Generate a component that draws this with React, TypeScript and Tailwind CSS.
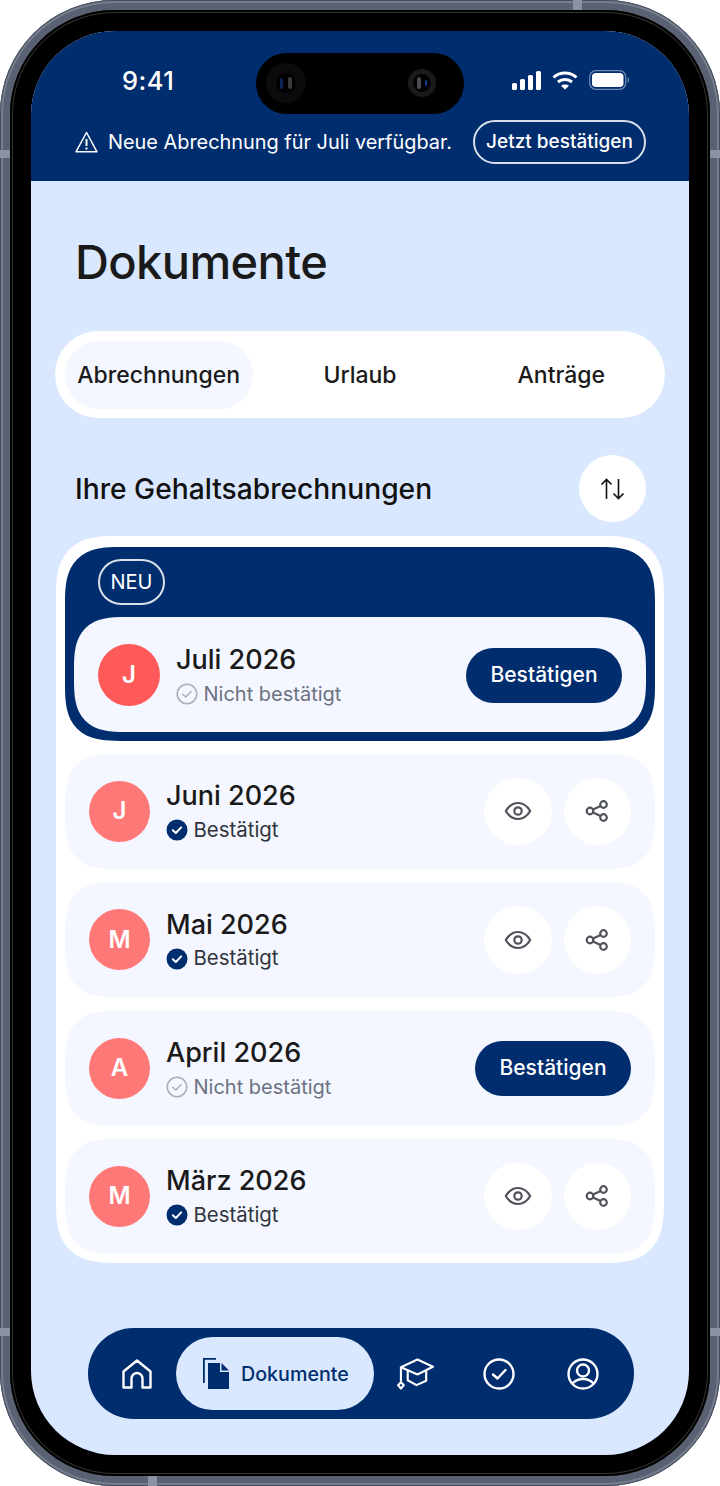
import type { ReactNode } from "react";

const font = { fontFamily: "Inter, 'Noto Sans', sans-serif" };

function CheckIcon({ done }: { done: boolean }) {
  if (done) {
    return (
      <svg width="22" height="22" viewBox="0 0 22 22" fill="none">
        <circle cx="11" cy="11" r="10.5" fill="#002d6e" />
        <path d="M6.8 11.2l3 2.8 5.4-5.6" stroke="#fff" strokeWidth="2" strokeLinecap="round" strokeLinejoin="round" />
      </svg>
    );
  }
  return (
    <svg width="22" height="22" viewBox="0 0 22 22" fill="none">
      <circle cx="11" cy="11" r="9.8" stroke="#a9afbd" strokeWidth="1.6" />
      <path d="M6.8 11.2l3 2.8 5.4-5.6" stroke="#a9afbd" strokeWidth="1.4" strokeLinecap="round" strokeLinejoin="round" />
    </svg>
  );
}

function EyeIcon() {
  return (
    <svg width="28" height="28" viewBox="0 0 28 28" fill="none" stroke="#50535c" strokeWidth="2.2">
      <path d="M1.8 14C5 8.6 9.2 6 14 6s9 2.6 12.2 8c-3.2 5.4-7.4 8-12.2 8S5 19.4 1.8 14z" strokeLinejoin="round" />
      <circle cx="14" cy="14" r="3.7" />
    </svg>
  );
}

function ShareIcon() {
  return (
    <svg width="24" height="24" viewBox="0 0 24 24" fill="none" stroke="#50535c" strokeWidth="2.2">
      <circle cx="18.5" cy="5.5" r="3.3" />
      <circle cx="5" cy="12" r="3.3" />
      <circle cx="18.5" cy="18.5" r="3.3" />
      <path d="M8 10.5l7.6-3.6M8 13.5l7.6 3.6" />
    </svg>
  );
}

function RoundButton({ children }: { children: ReactNode }) {
  return <div className="w-[67.5px] h-[67.5px] rounded-full bg-white flex items-center justify-center">{children}</div>;
}

function ConfirmButton() {
  return (
    <div className="w-[156px] h-[55px] rounded-full bg-[#002d6e] text-white text-[21px] font-medium flex items-center justify-center">
      Bestätigen
    </div>
  );
}

function RowBody({ letter, title, done, avatar }: { letter: string; title: string; done: boolean; avatar: string }) {
  return (
    <div className="flex items-center gap-4">
      <div className={`${avatar} rounded-full text-white text-[24px] font-semibold flex items-center justify-center`}>
        {letter}
      </div>
      <div className="flex flex-col pt-[2px]">
        <div className="text-[27px] leading-[36px] font-medium text-[#1a1a1a]">{title}</div>
        <div className="flex items-center gap-[5.5px] h-[32px]">
          <CheckIcon done={done} />
          <span className={done ? "text-[20.4px] text-[#30343c]" : "text-[20px] text-[#6c7282]"}>
            {done ? "Bestätigt" : "Nicht bestätigt"}
          </span>
        </div>
      </div>
    </div>
  );
}

function Row({ letter, title, done }: { letter: string; title: string; done: boolean }) {
  return (
    <div className="h-[115px] rounded-[52px] [corner-shape:superellipse(1.5)] bg-[#f4f7ff] px-6 flex items-center justify-between">
      <RowBody letter={letter} title={title} done={done} avatar="w-[61px] h-[61px] bg-[#ff7878]" />
      {done ? (
        <div className="flex items-center gap-3">
          <RoundButton>
            <EyeIcon />
          </RoundButton>
          <RoundButton>
            <ShareIcon />
          </RoundButton>
        </div>
      ) : (
        <ConfirmButton />
      )}
    </div>
  );
}

function Tab({ label, active }: { label: string; active?: boolean }) {
  return (
    <div className={`h-[68px] pt-[2px] rounded-full flex items-center justify-center text-[23px] font-medium text-[#1a1a1a] ${active ? "w-[188px] justify-self-center bg-[#f4f7ff]" : ""}`}>
      {label}
    </div>
  );
}

function Nav() {
  return (
    <div className="ml-[57px] mr-[55px] h-[91px] rounded-full bg-[#002d6e] flex items-center pl-[34px]">
      <svg className="shrink-0" width="30" height="30" viewBox="0 0 30 30" fill="none" stroke="#fff" strokeWidth="2.4" strokeLinejoin="round">
        <path d="M1.5 12.5L15 1.5l13.5 11v16h-8v-9a5.5 5.5 0 0 0-11 0v9h-8z" />
      </svg>
      <div className="ml-[24px] w-[198px] h-[73px] shrink-0 rounded-full bg-[#d9e8ff] flex items-center gap-[12px] pl-[27px]">
        <svg width="26" height="31" viewBox="0 0 26 31" fill="#002d6e">
          <path d="M0 0h13v1.8H1.8V25H0z" />
          <path d="M5 5h12v9h9v17H5z" />
          <path d="M18.5 5L26 12.5h-7.5z" />
        </svg>
        <span className="pt-[3px] text-[19.7px] font-medium text-[#002d6e]">Dokumente</span>
      </div>
      <svg className="ml-[23px] shrink-0" width="37" height="33" viewBox="0 0 38 34" fill="none" stroke="#fff" strokeWidth="2.2" strokeLinejoin="round">
        <path d="M4 10.5L21 2.5l16 7.5-16 8z" />
        <path d="M11 14v10l9 5 10-4.5V14" />
        <path d="M4 10.5V25" />
        <path d="M4 26l3 3-3 3.5L1 29z" />
      </svg>
      <svg className="ml-[49px] shrink-0" width="32" height="32" viewBox="0 0 32 32" fill="none" stroke="#fff" strokeWidth="2.4">
        <circle cx="16" cy="16" r="14.5" />
        <path d="M10 16.5l4.5 4 8-8.5" strokeLinecap="round" strokeLinejoin="round" />
      </svg>
      <svg className="ml-[52px] shrink-0" width="32" height="32" viewBox="0 0 32 32" fill="none" stroke="#fff" strokeWidth="2.4">
        <circle cx="16" cy="16" r="14.5" />
        <circle cx="16" cy="12.5" r="6" />
        <path d="M5.5 25.5c2.8-3 6.3-4.5 10.5-4.5s7.700 1.5 10.500 4.500" />
      </svg>
    </div>
  );
}

export default function App() {
  return (
    <div className="w-[720px] h-[1486px] bg-white relative overflow-hidden" style={font}>
      <div className="w-full h-full rounded-[114px] bg-[#5a6172] p-[10px] shadow-[inset_0_0_0_1px_#454c5b,inset_0_0_0_3px_#767d8c]">
        <div className="w-full h-full rounded-[104px] bg-black p-[21px] shadow-[inset_0_0_0_2px_#000,inset_0_0_0_3px_#333]">
          <div className="w-full h-full rounded-[84px] bg-[#d9e8ff] overflow-hidden flex flex-col relative">
            <div className="h-[150px] bg-[#002d6e] text-white flex flex-col shrink-0">
              <div className="h-[89px] flex items-center pt-[9px] justify-between pl-[91px] pr-[60px]">
                <span className="text-[25.5px] leading-[30px] mt-[2px] font-medium tracking-[0.5px]">9:41</span>
                <div className="flex items-center gap-[11px]">
                  <svg width="29" height="19" viewBox="0 0 29 19" fill="#fff">
                    <rect x="0" y="12" width="5" height="7" rx="1.5" />
                    <rect x="8" y="8" width="5" height="11" rx="1.5" />
                    <rect x="16" y="4" width="5" height="15" rx="1.5" />
                    <rect x="24" y="0" width="5" height="19" rx="1.5" />
                  </svg>
                  <svg width="26" height="19" viewBox="0 0 26 19" fill="none" stroke="#fff" strokeWidth="3">
                    <path d="M1.5 6.5C8 .6 18 .6 24.5 6.5" />
                    <path d="M6 11c4-3.4 10-3.4 14 0" />
                    <path d="M13 18.5l-4-3.7c2.3-1.800 5.700-1.800 8 0z" fill="#fff" stroke="none" />
                  </svg>
                  <svg width="40" height="20" viewBox="0 0 40 20" fill="none">
                    <rect x="0.7" y="0.7" width="36" height="18.6" rx="6" stroke="#6f8ab0" strokeWidth="1.3" />
                    <rect x="3" y="3" width="31.5" height="14" rx="3.8" fill="#fff" />
                    <path d="M38.6 7v6c1-.4 1.4-1.6 1.4-3s-.4-2.6-1.4-3z" fill="#6f8ab0" />
                  </svg>
                </div>
              </div>
              <div className="h-[44px] flex items-center pl-[44px]">
                <svg width="23" height="22" viewBox="0 0 23 22" fill="none" stroke="#fff" strokeWidth="1.5" strokeLinejoin="round">
                  <path d="M11.5 1.5L22 20.800H1z" />
                  <path d="M11.5 8v7M11.5 16.5v2" strokeWidth="2" />
                </svg>
                <span className="ml-[10px] pt-[2px] w-[344px] text-[19.9px] whitespace-nowrap">Neue Abrechnung für Juli verfügbar.</span>
                <div className="ml-[21px] w-[173px] h-[44px] pt-[1px] rounded-full border-2 border-white/85 flex items-center justify-center text-[19px] font-medium whitespace-nowrap">
                  Jetzt bestätigen
                </div>
              </div>
            </div>

            {/* dynamic island */}
            <div className="absolute left-[225px] top-[22px] w-[208px] h-[61px] rounded-full bg-black">
              <div className="absolute left-[10px] top-[10px] w-[40px] h-[40px] rounded-full bg-[#0b0b0d] flex items-center justify-center">
                <div className="w-[20px] h-[20px] rounded-full bg-black flex items-center justify-center gap-[5px]">
                  <div className="w-[3px] h-[11px] rounded-full bg-[#10265a]" />
                  <div className="w-[4px] h-[12px] rounded-full bg-[#3c3c40]" />
                </div>
              </div>
              <div className="absolute left-[152px] top-[16px] w-[28px] h-[28px] rounded-full bg-[#1a1a1d] flex items-center justify-center">
                <div className="w-[18px] h-[18px] rounded-full bg-black flex items-center justify-center gap-[4px]">
                  <div className="w-[4px] h-[12px] rounded-full bg-[#4a4a50]" />
                  <div className="w-[2px] h-[6px] rounded-full bg-[#1a3a90]" />
                </div>
              </div>
            </div>

            <h1 className="pl-[44px] mt-[50px] text-[47px] leading-[62px] font-medium text-[#1a1a1a] tracking-[-0.6px]">Dokumente</h1>

            <div className="mx-6 mt-[38px] h-[87px] rounded-full bg-white px-[3px] grid grid-cols-3 items-center">
              <Tab label="Abrechnungen" active />
              <Tab label="Urlaub" />
              <Tab label="Anträge" />
            </div>

            <div className="mt-[37px] pl-[44px] pr-[43px] flex items-center justify-between">
              <h2 className="pt-[2px] text-[28.2px] font-medium text-[#111] whitespace-nowrap">Ihre Gehaltsabrechnungen</h2>
              <div className="w-[67px] h-[67px] rounded-full bg-white flex items-center justify-center">
                <svg width="25" height="22" viewBox="0 0 25 22" fill="none" stroke="#111" strokeWidth="1.6">
                  <path d="M6.5 21V1.5M1.5 6.5l5-5 5 5" />
                  <path d="M18.5 1v19.5M13.5 15.5l5 5 5-5" />
                </svg>
              </div>
            </div>

            <div className="mx-[25px] mt-[14px] h-[727px] rounded-[62px] [corner-shape:superellipse(1.5)] bg-white px-[9px] pt-[11px] flex flex-col gap-[13.35px]">
              <div className="h-[193.6px] rounded-[56px] [corner-shape:superellipse(1.5)] bg-[#002d6e] px-[9px] pt-[12px] flex flex-col">
                <div className="ml-[24px] w-[67px] h-[46px] rounded-full border-2 border-white/85 text-white text-[20px] flex items-center justify-center">
                  NEU
                </div>
                <div className="mt-[12px] h-[115px] rounded-[52px] [corner-shape:superellipse(1.5)] bg-[#f4f7ff] px-6 flex items-center justify-between">
                  <RowBody letter="J" title="Juli 2026" done={false} avatar="w-[62px] h-[62px] bg-[#ff5a5a]" />
                  <div className="mt-[1px]">
                    <ConfirmButton />
                  </div>
                </div>
              </div>
              <Row letter="J" title="Juni 2026" done />
              <Row letter="M" title="Mai 2026" done />
              <Row letter="A" title="April 2026" done={false} />
              <Row letter="M" title="März 2026" done />
            </div>

            <div className="mt-auto mb-[36px]">
              <Nav />
            </div>
          </div>
        </div>
      </div>

      {/* antenna bands */}
      <div className="absolute left-0 top-[150px] w-[10px] h-[8px] bg-[#8a92a3]" />
      <div className="absolute right-0 top-[150px] w-[10px] h-[8px] bg-[#8a92a3]" />
      <div className="absolute left-0 top-[1328px] w-[10px] h-[8px] bg-[#8a92a3]" />
      <div className="absolute right-0 top-[1328px] w-[10px] h-[8px] bg-[#8a92a3]" />
      <div className="absolute left-[573px] top-0 w-[9px] h-[10px] bg-[#8a92a3]" />
      <div className="absolute left-[148px] bottom-0 w-[9px] h-[10px] bg-[#8a92a3]" />
    </div>
  );
}
